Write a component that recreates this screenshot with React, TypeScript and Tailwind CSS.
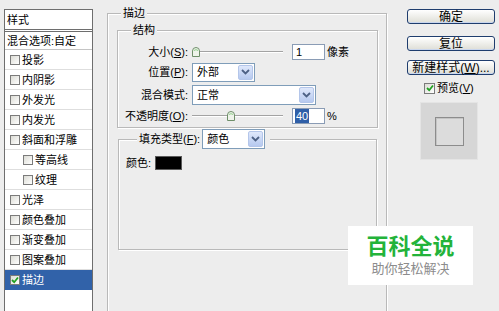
import type { ReactNode } from 'react'

const styles = [
  { label: '投影' },
  { label: '内阴影' },
  { label: '外发光' },
  { label: '内发光' },
  { label: '斜面和浮雕' },
  { label: '等高线', sub: true },
  { label: '纹理', sub: true },
  { label: '光泽' },
  { label: '颜色叠加' },
  { label: '渐变叠加' },
  { label: '图案叠加' },
  { label: '描边', on: true },
]

function Check({ on, className = '' }: { on?: boolean; className?: string }) {
  return (
    <span className={`flex shrink-0 items-center justify-center border border-[#7b7b7b] bg-linear-to-br from-[#dcdcd5] to-white ${className}`}>
      {on && (
        <svg width="8" height="8" viewBox="0 0 8 8">
          <path d="M1 4 L3.2 6.2 L7 1.5" fill="none" stroke="#21a121" strokeWidth="1.8" />
        </svg>
      )}
    </span>
  )
}

function Select({ value, className = '' }: { value: string; className?: string }) {
  return (
    <div className={`flex items-center border border-[#7f9db9] bg-white p-[1px] ${className}`}>
      <span className="flex-1 pl-[3px]">{value}</span>
      <span className="flex h-full w-[15px] items-center justify-center rounded-[2px] border border-[#b4c6ea] bg-linear-to-b from-[#dfe8fb] to-[#b6c9ef]">
        <svg width="9" height="6" viewBox="0 0 9 6">
          <path d="M1 1 L4.5 4.5 L8 1" fill="none" stroke="#4d6185" strokeWidth="1.8" />
        </svg>
      </span>
    </div>
  )
}

function Slider({ thumb }: { thumb: string }) {
  return (
    <div className="relative flex h-[12px] w-[91px] items-center">
      <div className="h-[2px] w-full border-t border-[#a3a3a3] bg-white" />
      <svg className={`absolute top-[1px] ${thumb}`} width="8" height="10" viewBox="0 0 8 10">
        <path d="M0.5 9.5 V4 Q0.5 0.5 4 0.5 Q7.5 0.5 7.5 4 V9.5 Z" fill="#eef3ea" stroke="#6f8f6a" />
        <path d="M2 3.5 Q4 1.8 6 3.5" fill="none" stroke="#8fd08a" />
      </svg>
    </div>
  )
}

function Row({ label, children, className = '' }: { label: ReactNode; children: ReactNode; className?: string }) {
  return (
    <div className={`flex h-[20px] items-center ${className}`}>
      <span className="w-[70px] text-right">{label}</span>
      <div className="ml-[4px] flex items-center">{children}</div>
    </div>
  )
}

function Button({ children, className = '' }: { children: ReactNode; className?: string }) {
  return (
    <div className={`flex h-[15px] w-[88px] items-center justify-center rounded-[3px] border border-[#1f3d6e] bg-linear-to-b from-white to-[#deded6] text-[12px] leading-none shadow-[inset_0_-1px_0_#c9d6ee] ${className}`}>
      {children}
    </div>
  )
}

const etched = 'border border-[#b9b9b9] shadow-[inset_1px_1px_0_#fff,1px_1px_0_#fff]'

function App() {
  return (
    <div className="relative flex h-[311px] w-[499px] overflow-hidden bg-[#ededed] font-['Liberation_Sans','Noto_Sans_CJK_SC',sans-serif] text-[11px] leading-[14px] text-black">
      {/* style list */}
      <div className="mt-[9px] ml-[4px] h-[320px] w-[89px] shrink-0 border border-[#6e6e6e] bg-white">
        <div className="flex h-[19px] items-center pl-[2px]">样式</div>
        <div className="h-[3px] border-y border-[#6e6e6e]" />
        <div className="flex h-[18px] items-center border-b border-[#c4c4c4] pl-[2px]">混合选项:自定</div>
        {styles.map((s) => (
          <div
            key={s.label}
            className={`flex h-[20px] items-center gap-[2px] border-b ${s.on ? 'border-[#3162a9] bg-[#3162a9] text-white' : 'border-[#dedede]'} ${s.sub ? 'pl-[18px]' : 'pl-[5px]'}`}
          >
            <Check on={s.on} className="h-[10px] w-[10px]" />
            <span>{s.label}</span>
          </div>
        ))}
      </div>

      {/* stroke group */}
      <fieldset className={`mt-[5px] ml-[14px] h-[330px] w-[280px] shrink-0 ${etched}`}>
        <legend className="ml-[13px] bg-[#ededed] px-[2px] leading-[16px]">描边</legend>

        <fieldset className={`mt-[1px] ml-[9px] w-[261px] ${etched}`}>
          <legend className="ml-[13px] bg-[#ededed] px-[2px] leading-[16px]">结构</legend>
          <div className="flex flex-col pt-[4px] pb-[1px]">
            <Row label={<>大小(<u>S</u>):</>}>
              <Slider thumb="left-[0px]" />
              <div className="ml-[9px] flex h-[16px] w-[33px] items-center border border-[#8a9cb5] bg-white pl-[3px]">1</div>
              <span className="ml-[2px]">像素</span>
            </Row>
            <Row label={<>位置(<u>P</u>):</>}>
              <Select value="外部" className="h-[19px] w-[63px]" />
            </Row>
            <Row label="混合模式:" className="mt-[3px]">
              <Select value="正常" className="h-[20px] w-[124px]" />
            </Row>
            <Row label={<>不透明度(<u>O</u>):</>} className="mt-[1px]">
              <Slider thumb="left-[35px]" />
              <div className="ml-[9px] flex h-[16px] w-[33px] items-center border border-[#8a9cb5] bg-white pl-[2px]">
                <span className="bg-[#2f5fa8] px-[1px] text-white">40</span>
              </div>
              <span className="ml-[2px]">%</span>
            </Row>
          </div>
        </fieldset>

        <fieldset className={`mt-[1px] ml-[10px] w-[259px] ${etched}`}>
          <legend className="mt-[8px] ml-[18px] flex items-center bg-[#ededed] pr-[5px] pl-[2px]">
            <span>填充类型(<u>F</u>):</span>
            <Select value="颜色" className="ml-[2px] h-[20px] w-[63px]" />
          </legend>
          <div className="h-[100px] pt-[7px] pl-[7px]">
            <div className="flex h-[14px] items-center">
              <span>颜色:</span>
              <span className="ml-[4px] h-[14px] w-[27px] border border-[#5a5a5a] bg-black" />
            </div>
          </div>
        </fieldset>
      </fieldset>

      {/* buttons and preview */}
      <div className="mt-[9px] ml-[20px] flex w-[88px] shrink-0 flex-col">
        <Button>确定</Button>
        <Button className="mt-[12px]">复位</Button>
        <Button className="mt-[9px]">新建样式(<u>W</u>)...</Button>
        <div className="mt-[6px] flex h-[14px] items-center gap-[2px] pl-[17px]">
          <Check on className="h-[11px] w-[11px]" />
          <span>预览(<u>V</u>)</span>
        </div>
        <div className="mt-[7px] ml-[13px] flex h-[58px] w-[58px] items-center justify-center border border-[#e4e4e4] bg-[#d6d6d6]">
          <div className="h-[29px] w-[29px] border border-[#8c8c8c] bg-[#dcdcdc] shadow-[inset_1px_1px_0_#c4c4c4]" />
        </div>
      </div>

      {/* watermark */}
      <div className="absolute top-[226px] left-[348px] flex h-[59px] w-[125px] flex-col items-center justify-center bg-white">
        <span className="text-[22px] leading-[26px] font-bold text-[#23b33a]">百科全说</span>
        <span className="text-[13px] leading-[17px] text-[#8c8c8c]">助你轻松解决</span>
      </div>
    </div>
  )
}

export default App
